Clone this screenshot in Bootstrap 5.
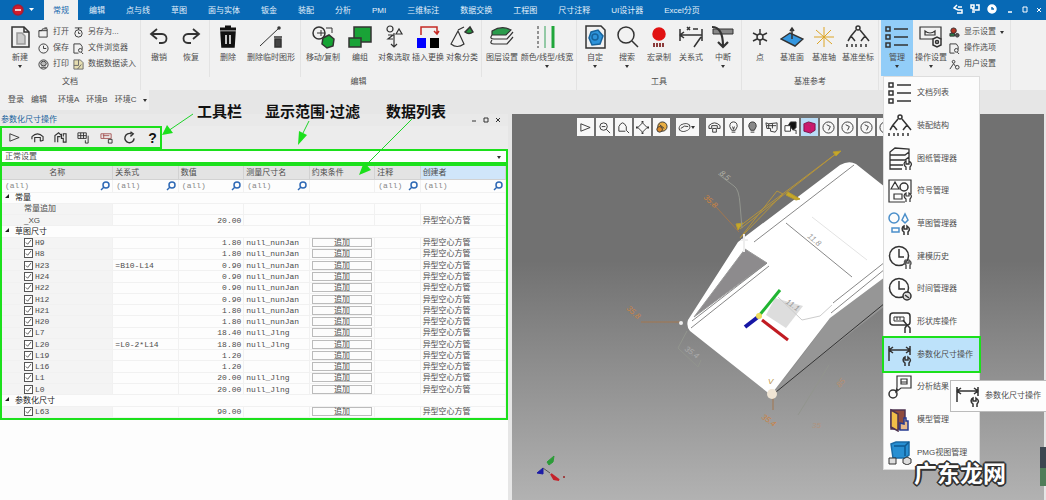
<!DOCTYPE html>
<html lang="zh-CN">
<head>
<meta charset="utf-8">
<meta name="viewport" content="width=device-width, initial-scale=1">
<title>参数化尺寸操作</title>
<link href="https://cdn.jsdelivr.net/npm/bootstrap@5.3.0/dist/css/bootstrap.min.css" rel="stylesheet">
<style>
body{font:8px/10px "Liberation Sans","Noto Sans CJK SC",sans-serif;color:#4c4c4c;background:#e6e6e6}
svg{fill:none;stroke:#333;stroke-width:1.5;display:block;flex:none}
svg.thin{stroke-width:1}
button,input,select{font:inherit;color:inherit}
.titlebar{background:#0769b5;height:20px}
.titlebar .logo-btn{width:44px;background:none;border:0;padding:0 0 0 11px}
.tabs{gap:1px}
.tabs a{color:#e4f1fb;padding:6px 10px 0;text-decoration:none;white-space:nowrap}
.tabs a.active{background:#f1f1f1;color:#1667ad;padding:6px 9px 0}
.win{gap:7px;padding:0 4px 3px 0}
.win button{background:none;border:0;padding:0;color:#fff}
.win svg{stroke:#fff}
.ribbon{background:#f1f1f1;height:70px}
.group{border-right:1px solid #e3e3e3;padding:0 2px;position:relative}
.group-name{height:13px;text-align:center}
.sub{padding:0 2px;border-right:1px solid #e3e3e3}
.sub:last-child{border:0}
.big{width:32px;height:52px;border:0;background:none;padding:5px 0 0;display:flex;flex-direction:column;align-items:center;white-space:nowrap}
.big svg{width:24px;height:24px;margin-bottom:4px}
.big.m{width:34px}.big.l{width:36px}.big.xl{width:40px}.big.xxl{width:54px}
.big.on{background:#92cdf8;height:56px}
.caret{width:0;height:0;border:2px solid transparent;border-top:3px solid #333;margin-top:2px}
.tiny{border:0;background:none;padding:0;height:16px;display:flex;align-items:center;gap:4px;white-space:nowrap}
.tiny svg{width:11px;height:11px}
.tools{width:149px;height:20px;background:#f0f0f0;padding-left:8px;gap:7px}
.tools button{border:0;background:none;padding:0;white-space:nowrap}
.panel{width:48.6%;background:#fdfdfd;position:relative}
.panel-title{height:12px;background:#e9e9e9;color:#20639c;padding:1px 5px 0 1px}
.bar-row{background:#ececec}
.bar{width:162px;height:23px;border:2px solid #1ce01c;gap:10px;padding-left:6px}
.bar button{border:0;background:none;padding:0;width:13px}
.bar svg{width:13px;height:13px}
.bar .help{font:700 14px "Liberation Sans",sans-serif;color:#111}
.scope{height:15px;border:2px solid #1ce01c;background:#fff;position:relative}
.scope select{appearance:none;border:0;background:none;width:100%;height:11px;line-height:10px;padding:0 3px;display:block}
.scope .caret{position:absolute;right:5px;top:3px}
.frame{border:2px solid #1ce01c}
.data{width:100%;height:252px;table-layout:fixed;border-collapse:collapse;background:#fdfdfd}
.data td,.data th{padding:0 2px;border:1px solid #f1f1f1;border-width:0 1px 1px 0;line-height:9px;white-space:nowrap;overflow:hidden;font-weight:400}
.data th{background:#e3e3e3;text-align:center;border-color:#d2d2d2;height:13px}
.data th.sel{background:#d0e6fa}
.data tbody td:first-child{background:#f4f4f4;padding-left:22px}
.data tbody tr.sec td,.data tbody tr.flt td{background:#fdfdfd}
.data tbody tr.sec td{padding-left:3px;color:#222}
.sec i{display:inline-block;border:2px solid transparent;border-right-color:#222;border-bottom-color:#222;margin-right:6px;vertical-align:2px}
.data tbody tr.flt td{padding-left:3px;height:13px}
.flt div{display:flex;justify-content:space-between}
.flt input{width:25px;border:0;padding:0;background:none;height:9px;color:#888}
.flt svg{width:10px;height:10px;stroke:#2e69b5}
.mono,.flt input{font-family:"Liberation Mono","Noto Sans CJK SC",monospace}
.data input[type=checkbox]{appearance:none;width:9px;height:9px;border:1px solid #555;margin:0 2px 0 0;vertical-align:top;background:#fff url("data:image/svg+xml,%3Csvg xmlns='http://www.w3.org/2000/svg' viewBox='0 0 8 8'%3E%3Cpath d='M1 4l2 2 4-5' fill='none' stroke='%23444'/%3E%3C/svg%3E")}
.data button{display:block;width:100%;height:9px;line-height:7px;border:1px solid #bbb;background:#fcfcfc;padding:0}
.notes{position:absolute;left:0;top:-14px;pointer-events:none}
.notes text{font:700 15px "Liberation Sans","Noto Sans CJK SC",sans-serif;fill:#111;stroke:none}
.view{background:linear-gradient(#717171 0 38%,#b2b2b2);margin-left:4px;margin-right:2px;position:relative;min-height:386px}
.view>svg{position:absolute;inset:0;width:100%;height:100%}
.viewbar{position:relative;margin:4px 0 0 65px;width:max-content;height:19px;gap:2px}
.viewbar button{width:17px;height:18px;padding:2px;border:0;background:#f7f7f7}
.viewbar button.w{width:23px;margin:0 5px 0 4px;display:flex;align-items:center}
.viewbar button.on{background:#b9dcf6}
.viewbar svg{width:13px;height:13px;stroke-width:1}
.view text{font:italic 8px "Liberation Sans",sans-serif;stroke:none}
.menu{position:absolute;left:2px;top:56px;width:97px;height:394px;background:#fcfcfc;border:1px solid #ddd;z-index:5}
.menu button{flex:1 1 0;min-height:0;display:flex;align-items:center;gap:5px;border:0;background:none;padding:0 0 0 4px;text-align:left;white-space:nowrap}
.menu svg,.tip svg{width:24px;height:24px}
.menu button.on{background:#bde2fa;outline:2px solid #1ce01c}
.tip{position:absolute;left:69px;top:360px;width:97px;height:32px;background:#fdfdfd;border:1px solid #bbb;display:flex;align-items:center;gap:5px;padding-left:5px;white-space:nowrap;z-index:6;overflow:hidden}
.brand-mark{position:absolute;right:38px;bottom:16px;font:700 23px/24px "Noto Sans CJK SC",sans-serif;color:#fff;z-index:7;text-shadow:1px 1px #333,-1px -1px #333,1px -1px #333,-1px 1px #333,2px 0 #333,-2px 0 #333,0 2px #333,0 -2px #333}
.dock{position:absolute;right:-2px;bottom:14px;width:6px;height:39px;background:#3c4650;border-bottom:18px solid #4f7c59}
</style>
</head>
<body>
<svg class="d-none">
<symbol id="i-new" viewBox="0 0 24 24"><path d="M4 2h12l5 5v15H4z"/><path d="M16 2v5h5"/><path d="M9 8h5l3 3v8H9z" fill="#ccc" stroke="#999"/></symbol>
<symbol id="i-open" viewBox="0 0 12 12"><path d="M1 11V4h3l1-2h5v9zM1 4h9M7 1h3" stroke-width="1"/></symbol>
<symbol id="i-save" viewBox="0 0 12 12"><g stroke-width="1"><circle cx="6" cy="6" r="5"/><path d="M6 3v3h3"/></g></symbol>
<symbol id="i-print" viewBox="0 0 12 12"><g stroke-width="1"><circle cx="6" cy="6" r="5"/><ellipse cx="6" cy="5" rx="3" ry="2.5" fill="#bbb"/><path d="M3 9h6"/></g></symbol>
<symbol id="i-watch" viewBox="0 0 12 12"><g stroke-width="1"><circle cx="6" cy="7" r="4"/><path d="M2 1h8M6 1v2M6 5v2h2"/></g></symbol>
<symbol id="i-doc" viewBox="0 0 12 12"><g stroke-width="1"><path d="M6 11H1V1h7l2 3v3"/><circle cx="8" cy="8" r="2"/><path d="M9 10l2 2"/></g></symbol>
<symbol id="i-read" viewBox="0 0 12 12"><g stroke-width="1" stroke="#666"><path d="M1 1h7l3 3v7H1z" fill="#e5ddb1"/><path d="M1 7h5V1M5 11l4-5"/></g></symbol>
<symbol id="i-undo" viewBox="0 0 24 24"><path d="M10 4L4 9l6 5M4 9h11c6 0 6 9 0 9h-3" stroke-width="1.8"/></symbol>
<symbol id="i-redo" viewBox="0 0 24 24"><path d="M14 4l6 5-6 5M20 9H9c-6 0-6 9 0 9h3" stroke-width="1.8"/></symbol>
<symbol id="i-del" viewBox="0 0 24 24"><path d="M5 7h14l-1 15H6z" fill="#111" stroke="#111"/><path d="M4 4h16M9 2h6" stroke="#111" stroke-width="3"/><path d="M10 10v9M14 10v9" stroke="#fff"/></symbol>
<symbol id="i-line" viewBox="0 0 24 24"><path d="M1 21L20 3" stroke-width="1"/><circle cx="20" cy="3" r="1"/><path d="M16 14h6v8h-6zM15 12h8" fill="#444"/></symbol>
<symbol id="i-move" viewBox="0 0 24 24"><circle cx="8" cy="8" r="6"/><path d="M6 8h8M10 5v6M15 3h6v5" stroke-width="1"/><path d="M12 13l6-3 5 4-1 7-6 2-5-4z" fill="#16a334"/></symbol>
<symbol id="i-grp" viewBox="0 0 24 24"><path d="M6 2h17v15H6z" fill="#19a337"/><path d="M1 13h12v9H1z" fill="#19a337"/></symbol>
<symbol id="i-pick" viewBox="0 0 24 24"><g stroke-width="1.2"><circle cx="8" cy="4" r="3"/><path d="M14 9l3-5 3 5zM6 10h5l-5 4h5M12 8v14M9 19l3 3 3-3"/></g></symbol>
<symbol id="i-swap" viewBox="0 0 24 24"><path d="M5 10V2h16v6M18 6l3 3 2-3" stroke="#c52a24"/><path d="M1 13h9v10H1z" fill="#00f" stroke="none"/><path d="M14 13h9v10h-9z" fill="#000" stroke="none"/></symbol>
<symbol id="i-cls" viewBox="0 0 24 24"><path d="M8 6L1 19q6 5 13 0zM8 5l6-3" stroke-width="1.2"/><path d="M15 7l5-5 3 5q-4 3-8 0z" fill="#27943f"/></symbol>
<symbol id="i-lay" viewBox="0 0 24 24"><g stroke-width="1.2"><path d="M2 6q10-6 19-1l-5 5H2z" fill="#2a9b4c"/><path d="M2 10q-3 4 2 4h13l6-7M2 15q-3 4 2 4h13l6-7"/></g></symbol>
<symbol id="i-col" viewBox="0 0 24 24"><path d="M3 1v22" stroke-dasharray="3 2" stroke-width="1"/><path d="M10 1v22" stroke="#36a15a" stroke-width="1"/><path d="M18 1v22" stroke="#20a63b" stroke-width="3"/></symbol>
<symbol id="i-auto" viewBox="0 0 24 24"><path d="M3 1h15l4 4v18H3z"/><path d="M8 7l7-2 5 6-3 8-8 1-3-7z" fill="#2e93da" stroke="#17639c"/><circle cx="12" cy="12" r="3" stroke="#17639c"/></symbol>
<symbol id="i-find" viewBox="0 0 24 24"><circle cx="11" cy="10" r="8"/><path d="M17 16l6 6"/></symbol>
<symbol id="i-rec" viewBox="0 0 24 24"><circle cx="12" cy="9" r="6" fill="#e11212" stroke="#e11212"/><path d="M6 20h12" stroke="#8b3a3a" stroke-width="4" stroke-dasharray="2 1"/></symbol>
<symbol id="i-dim" viewBox="0 0 24 24"><path d="M1 3v15M22 3v9M1 7h21M5 4L1 7l4 3M18 4l4 3-4 3M17 23v-3c-3-2-2-5 0-6v3h3v-3c3 2 3 4 1 6v3"/></symbol>
<symbol id="i-rel" viewBox="0 0 24 24"><path d="M1 4v12M23 4v12M1 10h22M5 7l-4 3 4 3M8 2l3 3M11 2L8 5M14 4h5M15 22l7-10"/></symbol>
<symbol id="i-cut" viewBox="0 0 24 24"><path d="M2 4h20v5H2z" fill="#888" stroke-width="1"/><path d="M1 2q11 0 11 19M7 17l5 5 5-5" stroke-width="2.2"/></symbol>
<symbol id="i-pt" viewBox="0 0 24 24"><circle cx="12" cy="12" r="3"/><path d="M12 4v5M12 15v5M5 8l4 2M15 14l4 2M19 8l-4 2M9 14l-4 2"/></symbol>
<symbol id="i-pln" viewBox="0 0 24 24"><path d="M1 14l9-6 13 6-8 7z" fill="#3497e0"/><path d="M12 14V4M10 6l2-3 2 3"/></symbol>
<symbol id="i-axis" viewBox="0 0 24 24"><path d="M2 12h20M12 2v20M4 5l16 14M19 5L5 19" stroke="#dda526" stroke-width="1"/></symbol>
<symbol id="i-tree" viewBox="0 0 24 24"><circle cx="12" cy="3" r="2"/><path d="M10 5l-5 6M14 5l5 6M5 11l-3 5M5 11l4 5M19 11l-4 5M19 11l4 5M1 19v3M6 19v3M10 19v3M15 19v3M20 19v3"/></symbol>
<symbol id="i-list" viewBox="0 0 24 24"><path d="M1 2h4v4H1zM1 10h4v4H1zM1 18h4v4H1zM9 4h14M9 12h14M9 20h14"/></symbol>
<symbol id="i-opt" viewBox="0 0 24 24"><path d="M1 2h21v12H1zM6 6q5 4 10 0v4H6z" stroke-width="1.2"/><path d="M14 14l4-2 4 2v6l-4 2-4-2z" fill="#f1f1f1"/><circle cx="18" cy="17" r="1.5"/></symbol>
<symbol id="i-show" viewBox="0 0 12 12"><g stroke-width="1"><circle cx="5" cy="4" r="3" fill="#b33524"/><path d="M1 7h5v3H1z" fill="#277a42"/><circle cx="9" cy="9" r="2" fill="#555"/></g></symbol>
<symbol id="i-user" viewBox="0 0 12 12"><g stroke-width="1"><circle cx="5" cy="3" r="1.500"/><path d="M5 5L1 11M5 5l2 3"/><circle cx="9" cy="9" r="2"/></g></symbol>
<symbol id="i-sheets" viewBox="0 0 24 24"><path d="M2 5l5-4 14 1v3l-4 3H2zM2 8v5h15l4-3V5M2 13v5h13M21 10v4M2 18v4h12M18 23v-3c-3-2-2-5 0-6v3h3v-3c3 2 3 4 1 6v3" stroke-width="1.3"/></symbol>
<symbol id="i-shapes" viewBox="0 0 24 24"><path d="M17 23H1V1h22v14M3 10l4-7 4 7zM6 15h8v5H6zM18 23v-3c-3-2-2-5 0-6v3h3v-3c3 2 3 4 1 6v3" stroke-width="1.2"/><circle cx="16" cy="8" r="4"/></symbol>
<symbol id="i-blue" viewBox="0 0 24 24"><g stroke="#4b8fca"><circle cx="6" cy="6" r="5"/><path d="M14 8l3-6 3 6-3 3zM4 16h7v4H4z"/></g><path d="M16 23v-3c-3-2-2-5 0-6v3h3v-3c3 2 3 4 1 6v3"/></symbol>
<symbol id="i-clock" viewBox="0 0 24 24"><circle cx="11" cy="11" r="9.500"/><path d="M11 4v8h5"/><path d="M18 24v-4c-3-2-1-5 0-5v3h3v-3c3 2 2 4 1 5v4" stroke="#555"/></symbol>
<symbol id="i-clock2" viewBox="0 0 24 24"><circle cx="11" cy="11" r="9.500"/><path d="M11 4v8h6"/><circle cx="19" cy="19" r="4" fill="#ddd"/><path d="M17 18l4 3"/></symbol>
<symbol id="i-form" viewBox="0 0 24 24"><rect x="2" y="3" width="20" height="12" rx="3"/><path d="M6 7h10v4H6zM9 7v3M12 7v3" stroke-width="1"/><path d="M15 10l4 5M17 23v-5l2-3 3 3v5"/></symbol>
<symbol id="i-an" viewBox="0 0 24 24"><path d="M9 1h14v12H13l-5 4 1-5zM13 4h6v5h-6zM13 7h6" stroke-width="1.2"/><circle cx="5" cy="19" r="4"/><path d="M7 16l3-2"/></symbol>
<symbol id="i-model" viewBox="0 0 24 24"><path d="M3 2h14v19H3z" fill="#8e4b3d" stroke="#4d3350"/><path d="M3 2l7 4v17l-7-4z" fill="#f1bf48" stroke="#4d3350"/><path d="M12 15v7h8v-9h-2v-3h-2v6z" fill="#e7b98a" stroke="#253a91"/></symbol>
<symbol id="i-view" viewBox="0 0 24 24"><path d="M3 3l5-2h13v13l-4 3H5z" fill="#278fd2" stroke="#1a6ba6"/><path d="M6 5h11v10M17 5l4-4" stroke="#0e5a91"/><path d="M1 17h7v6H1zM15 18l4-2 4 2v4l-4 2-4-2z" fill="#ddd" stroke-width="1"/></symbol>
<symbol id="i-play" viewBox="0 0 14 14"><path d="M2 3l10 4-10 4z" stroke-width="1"/></symbol>
<symbol id="i-arc" viewBox="0 0 14 14"><path d="M1 6q6-6 12 0v4l-3 1M4 12V7h6v4M1 6v3" stroke-width="1.2"/></symbol>
<symbol id="i-arc2" viewBox="0 0 14 14"><path d="M1 12V5l4-3 3 3M4 12V6h3M8 3v5h2v4h3V3h-3v3" stroke-width="1.2"/></symbol>
<symbol id="i-grid" viewBox="0 0 14 14"><path d="M1 2h9v6H1zM1 5h9M4 2v6M7 2v6M12 5v8H9v-3" stroke-width="1"/></symbol>
<symbol id="i-gridr" viewBox="0 0 14 14"><path d="M1 3h11v5H1zM3 5h7M4 3v5" stroke="#a65555" stroke-width="1"/><path d="M9 9h4v4H9z" stroke-width="1"/></symbol>
<symbol id="i-re" viewBox="0 0 14 14"><path d="M9 3a5 5 0 1 0 3 5M8 1l3 2-3 3"/></symbol>
<symbol id="i-mag" viewBox="0 0 10 10"><circle cx="6" cy="4" r="3"/><path d="M4 6L1 9"/></symbol>
<symbol id="v-zoom" viewBox="0 0 14 14"><circle cx="6" cy="6" r="4"/><path d="M9 9l4 4M4 6h4"/></symbol>
<symbol id="v-arc" viewBox="0 0 14 14"><path d="M2 11V6q4-8 8 0v4l3 3M2 11h7"/></symbol>
<symbol id="v-dia" viewBox="0 0 14 14"><path d="M7 2l5 5-5 5-5-5z"/><path d="M6 1h2M6 13h2M1 6v2M13 6v2" stroke-width="2"/></symbol>
<symbol id="v-ora" viewBox="0 0 14 14"><circle cx="8" cy="6" r="5" fill="#e9ae42"/><circle cx="5" cy="9" r="3" fill="#d98a2c"/><path d="M5 4l5 4"/></symbol>
<symbol id="v-eye" viewBox="0 0 14 14"><ellipse cx="7" cy="7" rx="6" ry="4" transform="rotate(-15 7 7)"/><path d="M3 8q4-4 8-2"/></symbol>
<symbol id="v-bulb" viewBox="0 0 14 14"><path d="M5 10L3 6q0-5 4-5t4 5l-2 4zM5 12h4M6 6l1 3 1-3"/></symbol>
<symbol id="v-bulbd" viewBox="0 0 14 14"><path d="M5 10L3 6q0-5 4-5t4 5l-2 4z" fill="#888"/><path d="M5 12h4"/></symbol>
<symbol id="v-hat" viewBox="0 0 14 14"><path d="M1 5q6-6 12 0v3h-3V5H4v3H1zM5 8h4v4H5z"/></symbol>
<symbol id="v-mach" viewBox="0 0 14 14"><path d="M1 2l3 1 9-1v7l-2 3-5-1V8H2zM4 3v5M8 3v5M2 5h10"/></symbol>
<symbol id="v-box" viewBox="0 0 14 14"><path d="M5 4l2-3h6v6l-3 3z" fill="#111"/><path d="M1 5h6v6H1zM11 10h2v4" fill="#fff"/></symbol>
<symbol id="v-cube" viewBox="0 0 14 14"><path d="M1 3l5-2 7 2v7l-5 3-7-2z" fill="#d0166e" stroke="#761447"/><path d="M1 3l7 2v8M8 5l5-2" stroke="#b0286a"/></symbol>
<symbol id="v-clk" viewBox="0 0 14 14"><circle cx="7" cy="7" r="6"/><path d="M5 4l4 2-2 4"/></symbol>
</svg>
<div class="min-vh-100 d-flex flex-column">
<header class="titlebar d-flex">
  <button class="logo-btn d-flex align-items-center gap-1" aria-label="主菜单"><svg width="14" height="14" viewBox="0 0 14 14"><circle cx="7" cy="7" r="5" fill="#d21c2b" stroke="#a61d35"/><path d="M4 7h6" stroke="#fff"/></svg><svg width="5" height="4"><path d="M0 0h5L2.500 3z" fill="#fff" stroke="none"/></svg></button>
  <nav class="tabs d-flex" id="tabs"></nav>
  <div class="win d-flex ms-auto align-items-center">
    <button aria-label="分享"><svg width="10" height="10" viewBox="0 0 10 10"><path d="M4 1L1 4l4 2M5 3h4M5 6h4v3H4"/></svg></button>
    <button aria-label="窗口"><svg width="10" height="10" viewBox="0 0 10 10"><path d="M1 1h3v3H1zM6 1h3v5H3V4M2 8h3"/></svg></button>
    <button aria-label="帮助"><svg width="12" height="10" viewBox="0 0 12 10"><circle cx="5" cy="5" r="4" fill="#fff"/><path d="M5 3v2h2" stroke="#0769b5"/></svg></button>
    <button aria-label="最小化"><svg width="8" height="10"><path d="M2 8h4"/></svg></button>
    <button aria-label="还原"><svg class="thin" width="8" height="10"><path d="M2 3h4v5H2z"/></svg></button>
    <button aria-label="关闭"><svg class="thin" width="6" height="10"><path d="M1 4l4 4M5 4L1 8"/></svg></button>
  </div>
</header>
<div class="ribbon d-flex">
  <div class="group d-flex flex-column" style="width:141px"><div class="d-flex flex-fill">
    <button class="big l"><svg><use href="#i-new"/></svg>新建<i class="caret"></i></button>
    <div class="pt-1"><button class="tiny"><svg><use href="#i-open"/></svg>打开</button><button class="tiny"><svg><use href="#i-save"/></svg>保存</button><button class="tiny"><svg><use href="#i-print"/></svg>打印</button></div>
    <div class="pt-1 ps-1"><button class="tiny"><svg><use href="#i-watch"/></svg>另存为...</button><button class="tiny"><svg><use href="#i-doc"/></svg>文件浏览器</button><button class="tiny"><svg><use href="#i-read"/></svg>数据数据读入</button></div>
  </div><div class="group-name">文档</div></div>
  <div class="group d-flex flex-column px-0"><div class="d-flex flex-fill">
    <div class="sub d-flex"><button class="big"><svg><use href="#i-undo"/></svg>撤销</button><button class="big"><svg><use href="#i-redo"/></svg>恢复</button></div>
    <div class="sub d-flex"><button class="big"><svg><use href="#i-del"/></svg>删除</button><button class="big xxl"><svg><use href="#i-line"/></svg>删除临时图形</button></div>
    <div class="sub d-flex"><button class="big xl"><svg><use href="#i-move"/></svg>移动/复制</button><button class="big m"><svg><use href="#i-grp"/></svg>编组</button><button class="big m"><svg><use href="#i-pick"/></svg>对象选取</button><button class="big m"><svg><use href="#i-swap"/></svg>插入更换</button><button class="big m"><svg><use href="#i-cls"/></svg>对象分类</button></div>
    <div class="sub d-flex"><button class="big l"><svg><use href="#i-lay"/></svg>图层设置</button><button class="big xxl"><svg><use href="#i-col"/></svg>颜色/线型/线宽<i class="caret"></i></button></div>
  </div><div class="group-name">编辑</div></div>
  <div class="group d-flex flex-column"><div class="d-flex flex-fill">
    <button class="big"><svg><use href="#i-auto"/></svg>自定<i class="caret"></i></button><button class="big"><svg><use href="#i-find"/></svg>搜索<i class="caret"></i></button><button class="big"><svg><use href="#i-rec"/></svg>宏录制</button><button class="big"><svg><use href="#i-rel"/></svg>关系式</button><button class="big"><svg><use href="#i-cut"/></svg>中断<i class="caret"></i></button>
  </div><div class="group-name">工具</div></div>
  <div class="group d-flex flex-column"><div class="d-flex flex-fill">
    <button class="big"><svg><use href="#i-pt"/></svg>点</button><button class="big"><svg><use href="#i-pln"/></svg>基准面</button><button class="big"><svg><use href="#i-axis"/></svg>基准轴</button><button class="big l"><svg><use href="#i-tree"/></svg>基准坐标</button>
  </div><div class="group-name">基准参考</div></div>
  <div class="group d-flex">
    <div class="position-relative"><button class="big on" aria-expanded="true"><svg><use href="#i-list"/></svg>管理<i class="caret"></i></button>
      <div class="menu d-flex flex-column" id="menu"></div>
      <div class="tip" role="tooltip"><svg><use href="#i-dim"/></svg>参数化尺寸操作</div>
    </div>
    <button class="big l"><svg><use href="#i-opt"/></svg>操作设置<i class="caret"></i></button>
    <div class="pt-1 pe-1"><button class="tiny"><svg><use href="#i-show"/></svg>显示设置<i class="caret"></i></button><button class="tiny"><svg><use href="#i-doc"/></svg>操作选项</button><button class="tiny"><svg><use href="#i-user"/></svg>用户设置</button></div>
  </div>
</div>
<div class="pb-1"><div class="tools d-flex align-items-center"><button>登录</button><button class="me-1">编辑</button><button>环境A</button><button>环境B</button><button>环境C</button><i class="caret"></i></div></div>
<main class="d-flex flex-fill position-relative">
  <section class="panel">
    <div class="panel-title d-flex justify-content-between"><span>参数化尺寸操作</span><svg class="thin" width="32" height="10"><path d="M1 6h4M13 3h4v4h-4zM25 3l4 4M29 3l-4 4"/></svg></div>
    <div class="bar-row"><div class="bar d-flex align-items-center" id="bar"></div></div>
    <div class="scope"><select aria-label="显示范围"><option>正常设置</option></select><i class="caret"></i></div>
    <div class="frame"><table class="data">
      <colgroup><col style="width:22%"><col style="width:13%"><col style="width:13%"><col style="width:13%"><col style="width:13%"><col style="width:9%"><col></colgroup>
      <thead><tr><th>名称</th><th class="text-start">关系式</th><th class="text-start">数值</th><th class="text-start">测量尺寸名</th><th class="text-start">约束条件</th><th class="text-start">注释</th><th class="sel text-start">创建者</th></tr></thead>
      <tbody id="rows"></tbody></table></div>
    <svg class="notes thin" width="460" height="80" viewBox="0 100 460 80"><text x="197" y="117">工具栏</text><text x="265" y="117">显示范围·过滤</text><text x="386" y="117">数据列表</text>
      <g stroke="#1fd32a"><path d="M193 114L168 131M309 121l-7 14M412 119l-46 46"/><g fill="#1ce01c" stroke="none"><path d="M162 135l5-10 6 8zM298 145l1-14 8 4zM359 175l5-13 7 8z"/></g></g></svg>
  </section>
  <section class="view flex-fill">
    <svg class="thin" viewBox="512 114 532 386" preserveAspectRatio="xMinYMin slice">
      <path d="M830 318L885 272v34L775 392z" fill="#969696" stroke="none"/><path d="M885 303L776 392" stroke="#333"/>
      <path d="M738 242L840 165q9-5 16-1l29 23v90l-55 41-57 74q-3 3-6 0l-77-61q-4-5-2-11z" fill="#fff" stroke="none"/>
      <path d="M745 249l22 14-73 54z" fill="#8d8b8d" stroke="#999"/><path d="M767 263l-75 58M769 266l-78 62" stroke="#888"/>
      <path d="M754 242l100-77M885 262l-52 41M885 269l-54 44M786 223l66 54" stroke="#888"/><path d="M812 217l55 43" stroke="#e3e3e3"/>
      <path d="M775 298l28 8-17 22-20-13z" fill="#ddd" stroke="none"/><path d="M778 297l24 23 18-4 12-11" stroke="#ccc"/>
      <path d="M740 226l97-73-97 76M740 238l37-47 6 3z" stroke="#b5943b"/><path d="M736 224l7-1-5 7zM833 152l8-1-5 5zM788 192l12 7-4 1-10-5z" fill="#c7a82a" stroke="#b79c2c"/>
      <path d="M718 174l16 12q5 3 6 18l2 24M687 331l-9 17 20 19 3-7M829 365l-31 50" stroke="#92958e"/>
      <path d="M707 197l32 35M641 322h39M773 398v12" stroke="#a3774f"/>
      <path d="M744 234v18M741 240h7" stroke="#eee" stroke-width="2"/><circle cx="681" cy="323" r="2" fill="#eee" stroke="none"/><circle cx="772" cy="394" r="5" fill="#f0e5d4" stroke="none"/>
      <path d="M758 317l22-27" stroke="#20b532" stroke-width="3"/><path d="M758 317l-13 10" stroke="#1616a5" stroke-width="4"/><path d="M762 320l26 20" stroke="#c11b22" stroke-width="3"/><circle cx="759" cy="316" r="3" fill="#eddc5d" stroke="none"/>
      <text fill="#c98346" transform="translate(703 198)rotate(42)">35.8</text><text fill="#c98346" transform="translate(626 309)rotate(42)">35.8</text><text fill="#c98346" transform="translate(761 418)rotate(35)">35.4</text><text fill="#b3b3a8" transform="translate(719 174)rotate(40)">8.5</text><text fill="#999" transform="translate(807 237)rotate(40)">11.8</text><text fill="#999" transform="translate(785 303)rotate(35)">11.1</text><text fill="#aaa" transform="translate(684 350)rotate(35)">35.4</text><text fill="#b98f6d" transform="translate(840 388)rotate(-50)">85</text><text fill="#b0937d" x="812" y="428">35</text><text fill="#b98f46" x="768" y="384">V</text>
      <path d="M547 462l7-6-1 6-4 3z" fill="#2c9c38" stroke="#2c9c38"/><path d="M537 473l6-5v6z" fill="#1b1ba6" stroke="#1b1ba6"/><path d="M551 474l8 6-5-1z" fill="#c5222a" stroke="#c5222a" stroke-width="2"/><path d="M543 468l7 5" stroke="#555"/><circle cx="564" cy="477" r="1" fill="#922" stroke="none"/>
    </svg>
    <div class="viewbar d-flex" id="viewbar"></div>
    <div class="brand-mark">广东龙网</div><div class="dock"></div>
  </section>
</main>
</div>
<script>
const $ = id => document.getElementById(id), ic = n => `<svg><use href="#${n}"/></svg>`;
$('tabs').innerHTML = '常规 编辑 点与线 草图 面与实体 钣金 装配 分析 PMI 三维标注 数据交换 工程图 尺寸注释 UI设计器 Excel分页'.split(' ')
  .map((t, i) => `<a href="#"${i ? '' : ' class="active"'}>${t}</a>`).join('');
$('menu').innerHTML = [['list','文档列表'],['tree','装配结构'],['sheets','图纸管理器'],['shapes','符号管理'],['blue','草图管理器'],['clock','建模历史'],['clock2','时间管理器'],['form','形状库操作'],['dim','参数化尺寸操作'],['an','分析结果'],['model','模型管理'],['view','PMG视图管理']]
  .map(([n, t]) => `<button${n === 'dim' ? ' class="on"' : ''}>${ic('i-' + n)}${t}</button>`).join('');
$('bar').innerHTML = ['play','arc','arc2','grid','gridr','re'].map(n => `<button aria-label="${n}">${ic('i-' + n)}</button>`).join('') + '<button class="help">?</button>';
$('viewbar').innerHTML = ['i-play','v-zoom','v-arc','v-dia','v-ora','v-eye','v-hat','v-bulb','v-bulbd','v-mach','v-box','v-cube','v-clk','v-clk','v-clk','v-clk']
  .map(n => `<button aria-label="${n}"${n === 'v-eye' ? ' class="w"' : n === 'v-cube' ? ' class="on"' : ''}>${ic(n)}${n === 'v-eye' ? '<i class="caret"></i>' : ''}</button>`).join('');
const flt = '<div><input aria-label="过滤" value="(all)">' + ic('i-mag') + '</div>';
const a = 'null_nunJan', b = 'null_Jlng';
const rows = [['常量'],['常量追加','','','',0],['_XG','','20.00','',0,1],['草图尺寸'],
 ['H9','','1.80',a],['H8','','1.80',a],['H23','=B10-L14','0.90',a],['H24','','0.90',a],['H22','','0.90',a],['H12','','0.90',a],['H21','','1.80',a],['H20','','1.80',a],
 ['L7','','18.40',b],['L20','=L0-2*L14','18.80',b],['L19','','1.20',''],['L16','','1.20',''],['L1','','20.00',b],['L0','','20.00',b],['参数化尺寸'],['L63','','90.00','']];
$('rows').innerHTML = `<tr class="flt">${[1,1,1,1,0,1,1].map(v => `<td>${v ? flt : ''}</td>`).join('')}</tr>` + rows.map(r => {
  if (r.length === 1) return `<tr class="sec"><td colspan="7"><i></i>${r[0]}</td></tr>`;
  const item = r[4] !== 0;
  return `<tr><td>${item ? `<label class="mono"><input type="checkbox" checked>${r[0]}</label>` : r[0]}</td><td class="mono">${r[1]}</td><td class="mono text-end">${r[2]}</td><td class="mono">${r[3]}</td><td>${item ? '<button>追加</button>' : ''}</td><td></td><td>${item || r[5] ? '异型空心方管' : ''}</td></tr>`;
}).join('');
</script>
<script src="https://cdn.jsdelivr.net/npm/bootstrap@5.3.0/dist/js/bootstrap.bundle.min.js"></script>
</body>
</html>
